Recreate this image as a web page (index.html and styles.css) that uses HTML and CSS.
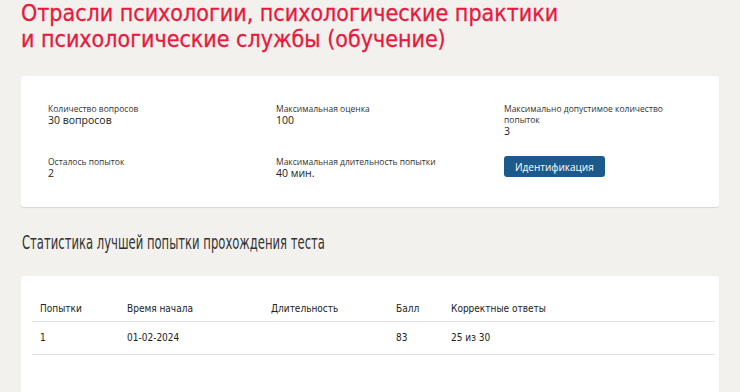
FILE: index.html
```html
<!DOCTYPE html>
<html lang="ru">
<head>
    <meta charset="UTF-8">
    <meta name="viewport" content="width=device-width, initial-scale=1.0">
    <title>Тест</title>
    <link rel="stylesheet" href="styles.css">
</head>
<body>
    <div class="page">
        <h1 class="title">Отрасли психологии, психологические практики<br>и психологические службы (обучение)</h1>

        <div class="card info">
            <div class="info-item">
                <div class="label">Количество вопросов</div>
                <div class="value">30 вопросов</div>
            </div>
            <div class="info-item">
                <div class="label">Максимальная оценка</div>
                <div class="value">100</div>
            </div>
            <div class="info-item">
                <div class="label">Максимально допустимое количество попыток</div>
                <div class="value">3</div>
            </div>
            <div class="info-item">
                <div class="label">Осталось попыток</div>
                <div class="value">2</div>
            </div>
            <div class="info-item">
                <div class="label">Максимальная длительность попытки</div>
                <div class="value">40 мин.</div>
            </div>
            <div class="info-item">
                <button class="btn">Идентификация</button>
            </div>
        </div>

        <h2 class="subtitle"><span>Статистика лучшей попытки прохождения теста</span></h2>

        <div class="card stats">
            <table>
                <thead>
                    <tr>
                        <th class="col-try">Попытки</th>
                        <th class="col-start">Время начала</th>
                        <th class="col-dur">Длительность</th>
                        <th class="col-score">Балл</th>
                        <th>Корректные ответы</th>
                    </tr>
                </thead>
                <tbody>
                    <tr>
                        <td>1</td>
                        <td>01-02-2024</td>
                        <td></td>
                        <td>83</td>
                        <td>25 из 30</td>
                    </tr>
                </tbody>
            </table>
        </div>
    </div>
</body>
</html>
```

FILE: styles.css
```css
body{
    margin: 0;
    background: #f2f1ee;
    font-family: "Open Sans", "DejaVu Sans", sans-serif;
    color: #222;
}
.page{
    padding: 0 21px;
}
.title{
    margin: 0;
    padding: 0;
    font-family: "DejaVu Sans Condensed", "DejaVu Sans", sans-serif;
    font-weight: normal;
    font-size: 23px;
    line-height: 26px;
    color: #e8193c;
    -webkit-text-stroke: 0.3px #e8193c;
}
.card{
    background: #fff;
    border-radius: 3px;
    box-shadow: 0 1px 1px rgba(0, 0, 0, 0.12);
}
.info{
    margin-top: 24px;
    display: grid;
    grid-template-columns: 228px 228px 180px;
    row-gap: 18px;
    padding: 27px 0 27px 27px;
}
.info-item{
    display: flex;
    flex-direction: column;
}
.label{
    font-size: 8.5px;
    line-height: 11px;
    color: #333;
}
.value{
    font-size: 10.5px;
    line-height: 13px;
    color: #222;
}
.btn{
    align-self: flex-start;
    padding: 0 11px;
    height: 21px;
    border: none;
    border-radius: 3px;
    background: #1c5a8c;
    color: #fff;
    font-family: "Open Sans", sans-serif;
    font-size: 10px;
}
.subtitle{
    margin: 22px 0 0 1px;
    font-family: "DejaVu Sans Condensed", "DejaVu Sans", sans-serif;
    font-weight: 300;
    font-size: 20px;
    line-height: 26px;
    color: #333;
    white-space: nowrap;
}
.subtitle span{
    display: inline-block;
    transform: scaleX(0.645);
    transform-origin: left center;
}
.stats{
    margin-top: 21px;
    padding: 22px 4px 60px 11px;
}
table{
    width: 100%;
    border-collapse: collapse;
    font-family: "DejaVu Sans Condensed", "DejaVu Sans", sans-serif;
    font-size: 10px;
    color: #222;
}
th{
    font-weight: normal;
    text-align: left;
    padding: 5px 8px 7px;
    border-bottom: 1px solid #e2e1dd;
}
td{
    padding: 10px 8px 11px;
    border-bottom: 1px solid #e2e1dd;
}
.col-try{
    width: 71px;
}
.col-start{
    width: 128px;
}
.col-dur{
    width: 109px;
}
.col-score{
    width: 39px;
}
```
